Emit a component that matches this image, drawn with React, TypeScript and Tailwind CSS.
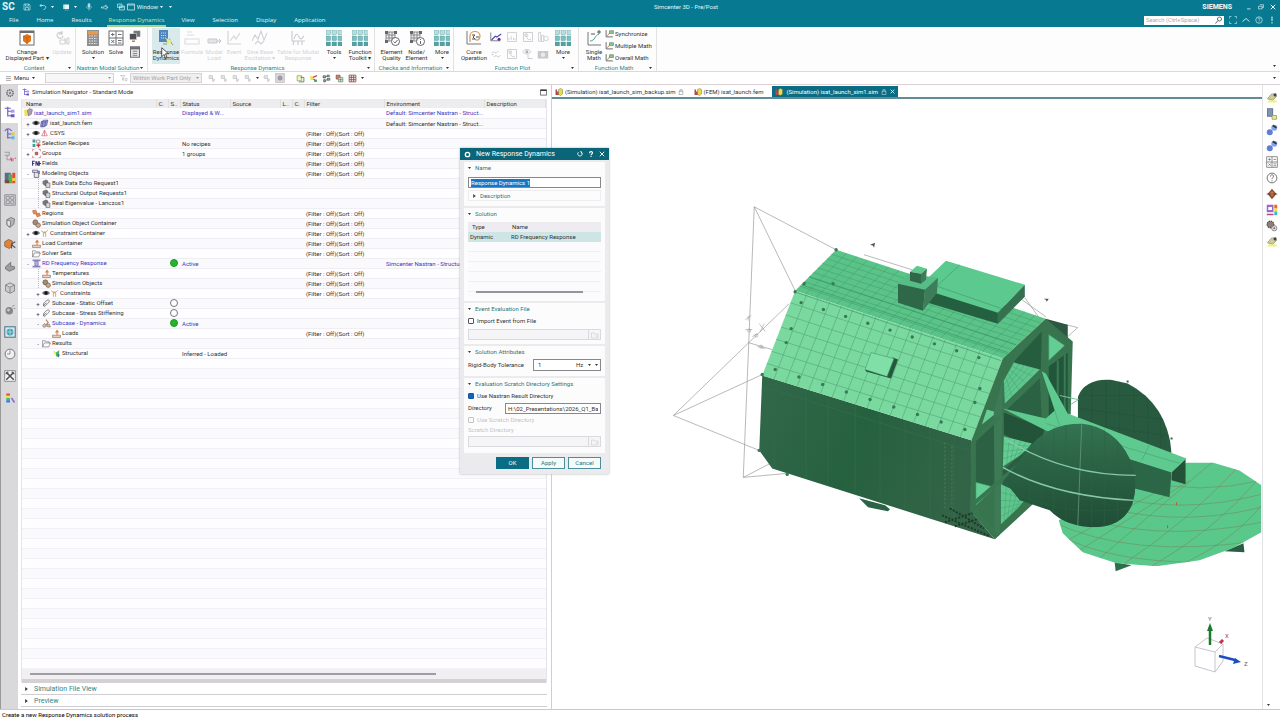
import { useState, type ReactNode } from 'react'

type Pt = [number, number]

const teal = '#4fa3a5'
const grey = '#6b6b70'

// small 16x16 drawings shared by the ribbon, the side bars and the tree
const glyphs: Record<string, ReactNode> = {
    part: <><rect x="1" y="1" width="14" height="14" fill="#fff" stroke={grey} /><path d="M1 2h14" stroke={grey} strokeWidth="2" /><path d="M8 4l4 2v5l-4 3-4-3V6z" fill="#e2761b" /><path d="M4 6l4 2 4-2M8 8v6" stroke="#b8540c" fill="none" strokeWidth=".7" /></>,
    update: <><path d="M8 3a3 3 0 1 0 1 3M8 1v3H5" stroke="#d0d0d4" fill="none" strokeWidth="1.3" /><path d="M6 10h5v4H6zM10 9h2v5M13 8h2v6h-2z" stroke="#d0d0d4" fill="none" /></>,
    solution: <><rect x="2" y="0" width="12" height="16" fill="#8f9092" /><rect x="3" y="1" width="10" height="3.5" fill="#ee9a45" /><path d="M4 6h8M4 8.500h8M4 11h8M4 13.500h8" stroke="#e8e8e8" strokeDasharray="1.500 1" /></>,
    solve: <><rect x="1" y="1" width="14" height="14" fill="#fff" stroke={grey} /><path d="M8 1v14M1 8h14M3 4.500h3.500M4.700 3v3M10 4.500h3.500M3.300 10l3 3M6.300 10l-3 3M10 10.500h3.500M10 13h3.500" stroke={grey} /></>,
    copy: <><rect x="6" y="1" width="9" height="8" fill="#77787c" /><rect x="1" y="5" width="9" height="8" fill="#4f5055" stroke="#eee" strokeWidth=".6" /><path d="M4 15h4" stroke="#d57a35" strokeWidth="2" /></>,
    sheet: <><rect x="2" y="1" width="12" height="14" fill="#e4e4e6" stroke={grey} strokeWidth="1.300" /><path d="M2 3h12" stroke={grey} strokeWidth="3" /><path d="M5 7h6M5 10h6M5 12.500h6" stroke={grey} /></>,
    response: <><rect x="1" y="0" width="9" height="12" fill="#4f87bd" /><path d="M3 3h5M3 5.500h5M3 8h5" stroke="#c7ddf1" strokeDasharray="1.200 .8" /><path d="M5 14h4M9 13c2-6 3-4 4-1s2 3 2 2" stroke="#8b9a6b" fill="none" /><path d="M8 8l6 3-4 4z" fill="#e8ee8c" /></>,
    faintBox: <><path d="M3 2h5M3 5h7M1 9h14v5H1z" stroke="#dcdce0" fill="none" strokeWidth="1.200" /></>,
    faintArrow: <><path d="M2 9h9v4H2z" fill="#e4e4e8" stroke="#c9c9ce" /><path d="M11 11h4M13 9l2 2-2 2" stroke="#c2c2c8" fill="none" /></>,
    faintChart: <path d="M2 1v13h13M4 11l4-5 2 3 4-6" stroke="#d5d5da" fill="none" strokeWidth="1.200" />,
    faintWave: <path d="M0 11l3-6 3 4 3-8 3 9 3-7M3 14l3-3 3 3 3-3" stroke="#cfcfd5" fill="none" strokeWidth="1.100" />,
    faintAxis: <><path d="M2 1v10h13M4 9c2-6 3-6 5-2s3 1 5-1M4 11l-1 4M8 11v4M12 11v4" stroke="#c9c9cf" fill="none" strokeWidth="1.100" /></>,
    grid: <>{[0, 6, 12].map(y => [0, 6, 12].map(x => <rect key={`${x}${y}`} x={x} y={y} width="4.500" height="4.500" fill={y === 0 ? '#b6dfe0' : y === 6 ? '#7cc0c1' : teal} stroke="#4f9597" strokeWidth=".4" />))}</>,
    quality: <><path d="M2 2h9v9H2zM5 2v9M8 2v9M2 5h9M2 8h9" stroke="#8b8b90" fill="#efefef" /><path d="M1 1h3v3H1zM10 1h3v3h-3zM1 10h3v3H1z" fill="#66666b" /><circle cx="11.500" cy="11.500" r="4" fill="#fff" stroke="#66666b" /><path d="M9.500 11.500l1.500 1.500 2.500-3" stroke="#66666b" fill="none" /></>,
    info: <><path d="M2 2h9v9H2zM5 2v9M8 2v9M2 5h9M2 8h9" stroke="#8b8b90" fill="#efefef" /><path d="M1 1h3v3H1zM10 1h3v3h-3zM1 10h3v3H1z" fill="#66666b" /><circle cx="11.500" cy="11.500" r="4" fill="#fff" stroke="#66666b" /><path d="M11.500 9v1M11.500 11v3" stroke="#66666b" /></>,
    curve: <><path d="M1 1v13h14" stroke="#77777c" fill="none" /><path d="M4 12V6c0-6 10-6 10 0 0 4-3 5-5 3" stroke="#dd9251" fill="none" strokeWidth="1.200" /><path d="M6 5h3L7 7l2 2H6M10 7h3" stroke="#55555a" fill="none" /></>,
    plot: <><path d="M1 2v11h13" stroke="#77777c" fill="none" strokeWidth="1.200" /><path d="M2 12l5-5 2 1 6-4" stroke="#4a4ac0" fill="none" strokeWidth="1.500" /><circle cx="12" cy="11" r="2" fill="#61288a" /></>,
    plotOff: <path d="M2 2h12v12H2zM4 12V9M7 12V7M10 12V9M12 12v-2" stroke="#c6c6cb" fill="none" />,
    plotOff2: <path d="M2 2h12v12H2zM4 4h3v3H4zM6 7c1 5 3 5 6 4" stroke="#bfbfc5" fill="none" />,
    barsOff: <><path d="M2 2h3v12H2zM6 6h3v8H6z" stroke="#c8c8cd" fill="none" /><circle cx="12" cy="10" r="3" stroke="#c8c8cd" fill="none" /></>,
    waveOff: <path d="M2 7l3-2 3 2 3-3M5 12l3-2 3 2 3-2M2 9h3" stroke="#c0c0c6" fill="none" />,
    eyeOff: <><path d="M1 5c3-4 8-4 11 0-3 4-8 4-11 0zM8 9v5h6" stroke="#bcbcc2" fill="none" /><circle cx="6.500" cy="5" r="2" fill="#b0b0b6" /></>,
    camOff: <><rect x="1" y="4" width="14" height="10" fill="#c8c8cc" /><circle cx="8" cy="9" r="3" fill="#e9e9eb" /></>,
    math: <><path d="M2 2v13h13" stroke="#77777c" fill="none" /><path d="M4 11c5 0 5-6 9-7" stroke="#4c9c8b" fill="none" /><path d="M5 4h4M11 2h4M13 0v4" stroke="#55555a" /></>,
    mathRow: <><path d="M2 2v12h12" stroke="#55555a" fill="none" strokeWidth="1.500" /><path d="M4 12l7-8" stroke="#a9793a" strokeWidth="1.500" /><path d="M8 3h7v5H8z" fill="#8bc48e" stroke="#4f7f62" /></>,
    navigator: <><path d="M1 3h8M5 1v13M5 7h5M5 13h5" stroke="#6a5ac7" fill="none" strokeWidth="1.500" /><rect x="9" y="5" width="5" height="4" fill="#a89de0" /><rect x="9" y="11" width="5" height="4" fill="#6a5ac7" /></>,
    navigator2: <><path d="M1 4c3-4 7-4 9 0M5 1v13M5 8h5M5 13h5" stroke="#6a5ac7" fill="none" strokeWidth="1.500" /><rect x="10" y="6" width="4" height="4" fill="#e8c845" /><rect x="10" y="11" width="4" height="4" fill="#5ab8dc" /></>,
    gear: <><circle cx="8" cy="8" r="5" fill="#d9d9dc" stroke="#6c6c70" strokeWidth="2.500" strokeDasharray="2 1" /><circle cx="8" cy="8" r="2" fill="#8a8a8d" /></>,
    assembly: <><path d="M1 3h6v4H1M4 7v6h4" stroke="#8b8b90" fill="none" /><path d="M8 11h2v4M8 13h3M12 11v4M14 11h2" stroke="#d4506b" fill="none" strokeWidth="1.300" /></>,
    views: <><rect x="1" y="1" width="8" height="12" fill="#5a6a94" /><rect x="6" y="3" width="5" height="12" fill="#54b454" /><rect x="11" y="1" width="4" height="14" fill="#e34d3d" /><path d="M11 8h4v4h-4z" fill="#efd441" /><path d="M1 11h6v4H1z" fill="#7a4a35" /></>,
    tiles: <path d="M1 1h14v14H1zM3 3h4v4H3zM9 3h4v4H9zM3 9h4v4H3zM9 9h4v4H9z" stroke="#8a8a8e" fill="none" strokeWidth="1.200" />,
    cylinder: <><path d="M4 5l5-3 5 2-1 7-5 4-4-3z" fill="#b6b6ba" stroke="#66666a" /><path d="M4 5l5 2-1 8-4-3z" fill="#e4e4e6" stroke="#66666a" /></>,
    orange: <><path d="M1 5l5-3 5 2v6l-4 4-6-3z" fill="#e2833a" stroke="#7a5a3d" /><path d="M10 8l5-3M10 9l5 4M10 8v6" stroke="#55555a" strokeWidth="1.500" /></>,
    wedge: <><path d="M2 9l7-6v5l5 1v3l-7 3-5-3z" fill="#9b9ba0" stroke="#6a6a6e" /></>,
    cube: <path d="M2 4l6-3 6 3v8l-6 3-6-3zM2 4l6 3 6-3M8 7v8" fill="#c9c9cc" stroke="#77777b" />,
    ball: <><circle cx="7" cy="9" r="5" fill="#85858a" /><circle cx="6" cy="8" r="2" fill="#c5c5c9" /><path d="M11 3l3-1M13 6h2" stroke="#77777b" /></>,
    globe: <><rect x="1" y="1" width="14" height="14" fill="#d5e6ec" stroke="#5a7f91" strokeWidth="1.500" /><circle cx="8" cy="8" r="4.500" fill="#3f9fb4" /><path d="M4 8h8M8 4v8" stroke="#bfe4ea" /></>,
    clock: <><circle cx="8" cy="8" r="6.500" fill="#f0f0f2" stroke="#77777b" strokeWidth="1.300" /><path d="M8 3v5H4" stroke="#77777b" fill="none" /></>,
    tools: <><rect x="1" y="1" width="14" height="14" fill="#f3f3f4" stroke="#77777b" /><path d="M3 3l10 10M13 3L3 13" stroke="#4f4f54" strokeWidth="2" /><path d="M2 5h3V2M14 5h-3V2" stroke="#4f4f54" fill="none" strokeWidth="1.300" /></>,
    rainbow: <><path d="M3 2h5v3H3z" fill="#e8502f" /><path d="M3 5h5v3H3z" fill="#f2e13c" /><path d="M3 8h5v3H3z" fill="#3cc46a" /><path d="M3 11h5v3H3z" fill="#2f7de0" /><path d="M10 8l4 6" stroke="#8e6ad0" strokeWidth="2" /></>,
    sim: <><path d="M0 3h7l2 11H1z" fill="#f0e35a" /><path d="M6 4l4-3 5 2-2 8-5 3z" fill="#a6a0ae" stroke="#6f6678" /></>,
    fem: <><path d="M2 5l5-3h7l-2 9-5 3H1z" fill="#8f97d0" stroke="#4c4c88" /><path d="M2 5h8l4-3M10 5l-2 9M5 5l-1 9" stroke="#4c4c88" fill="none" /></>,
    csys: <path d="M8 2l-5 10h10zM8 2v10" stroke="#d1606c" fill="none" strokeWidth="1.200" />,
    recipes: <><path d="M1 1h5v5H1zM1 9h5v5H1z" fill="#489e96" /><path d="M8 2h6v5H8z" fill="none" stroke="#666" /><path d="M8 11h7M11.500 8v7" stroke="#c43b3b" strokeWidth="2.500" /></>,
    groups: <><path d="M1 4V1h3M12 1h3v3M1 12v3h3M12 15h3v-3" stroke="#d26d6d" fill="none" strokeWidth="1.300" /><path d="M5 5h6v6H5z" fill="#a66d58" /></>,
    fields: <path d="M1 12V4h4M1 8h3M7 12V4l4 8V4M13 4v8M13 8h3" stroke="#35356e" fill="none" strokeWidth="1.800" />,
    objects: <><path d="M1 2h9v4H1zM4 6v9h8V5" fill="#e5e5ea" stroke="#44446a" strokeWidth="1.200" /><path d="M10 3h4v6h-4z" fill="#7b7ba9" /></>,
    card: <><path d="M1 4l6-3 4 2v7l-5 3-5-4z" fill="#77777b" /><path d="M7 7h7v8H7z" fill="#d7d7da" stroke="#4d4d51" /></>,
    regions: <><path d="M1 3l6-1 2 6-6 1zM7 9l6-2 2 5-6 2z" fill="#e98b53" stroke="#b55d2a" /></>,
    simObj: <><circle cx="6" cy="6" r="4.500" fill="#a98c72" stroke="#5d4d40" /><circle cx="11" cy="11" r="4" fill="#c9a98a" stroke="#5d4d40" /></>,
    constraint: <><path d="M2 3l4 3v8M14 2l-4 4v8" stroke="#8bbd63" fill="none" strokeWidth="1.500" /><path d="M6 6h4" stroke="#e39745" strokeWidth="3" /></>,
    load: <><path d="M1 15v-4h14v4z" fill="#e6d7c8" stroke="#7a5b45" /><path d="M8 11V6H5l4-5 4 5h-3v5z" fill="#dc8444" /></>,
    folder: <path d="M1 14V3h5l1 2h6v3M1 14l3-7h11l-3 7z" fill="#fbfbfb" stroke="#66666a" />,
    pillar: <><path d="M1 1h14v3H1zM1 12h14v3H1z" fill="#8a87c0" /><path d="M5 4h6v8H5z" fill="#b2b0d8" stroke="#6461a0" /></>,
    clip: <path d="M3 12c-2-4 4-9 7-10s4 2 2 4-6 7-8 7-1-3 4-6" stroke="#66666a" fill="none" strokeWidth="1.500" />,
    dynamics: <><path d="M7 1l4 5-7 8" stroke="#b48269" fill="none" strokeWidth="2" /><path d="M1 11l4-3 3 5-5 2zM9 10l4-1 2 5h-5z" fill="#d3c0b4" stroke="#7a6a60" /></>,
    structural: <><path d="M2 2l5 4v4l-3-1z" fill="#efe94a" /><path d="M7 6l6-4-1 12-5-1z" fill="#49b85d" /><path d="M10 9l4 1-3 5z" fill="#3566b8" /></>,
    eye: <><path d="M0 8c4-6 12-6 16 0-4 6-12 6-16 0z" fill="#77777c" /><circle cx="8" cy="8" r="3.500" fill="#111" /></>,
    rulerYellow: <><path d="M2 9l5-6 6-1 1 4-5 5z" fill="#cfcf9a" stroke="#8b8b82" /><path d="M4 11h10v3H2z" fill="#eef07c" /><circle cx="12" cy="4" r="2" fill="#444" /></>,
    dbYellow: <><rect x="2" y="1" width="7" height="10" fill="#7f93b5" stroke="#55607a" /><path d="M8 10h6v5H8z" fill="#e3e98f" stroke="#93965c" /></>,
    dumbbell: <><circle cx="5" cy="11" r="4" fill="#5d7fd6" /><circle cx="11" cy="5" r="4" fill="#86a2ea" /><path d="M9 2l5 3" stroke="#333" strokeWidth="2" /></>,
    help: <><circle cx="8" cy="8" r="6.500" fill="#fff" stroke="#66666a" strokeWidth="1.200" /><path d="M6 6c0-3 4-3 4-.5C10 7.500 8 7.500 8 9.500M8 11v1.500" stroke="#66666a" fill="none" strokeWidth="1.200" /></>,
    diamond: <><path d="M8 1l6 7-6 7-6-7z" fill="#8d4f35" /><path d="M8 4l3 4-3 3-3-3z" fill="#d97f4b" /><path d="M1 8h14" stroke="#4c3b33" /></>,
    palette: <><rect x="1" y="1" width="9" height="10" fill="#9a6ac9" /><path d="M3 4h5v4H3z" fill="#fff" /><path d="M11 1h4v5h-4z" fill="#f0692f" /><path d="M11 6h4v4h-4z" fill="#e6e04b" /><path d="M11 10h4v5h-4z" fill="#44b9c4" /><path d="M1 14h9" stroke="#b14a8d" strokeWidth="2" /></>,
    gears: <><circle cx="6" cy="6" r="4.500" fill="#8d8072" stroke="#4e463e" strokeDasharray="2 1" strokeWidth="1.500" /><circle cx="11" cy="11" r="3.500" fill="#e6e6e8" stroke="#6d6d71" /><circle cx="11" cy="11" r="1.300" fill="#6d6d71" /></>,
    pick: <><path d="M2 3h7v6H2zM8 8l6 4-3 1-1 3z" stroke="#b9b9bf" fill="#e2e2e6" /></>,
    pickGreen: <><path d="M2 3h8v9H2z" fill="#f6f6b9" stroke="#77774a" /><path d="M8 6h6v8H5" fill="none" stroke="#2e8b57" strokeWidth="1.500" /></>,
    brush: <><path d="M2 3l5 2 1 5-5 1z" fill="#e8e04d" /><path d="M7 6l7-3M8 9l5 4" stroke="#c8483e" strokeWidth="2.500" /><path d="M9 10h5v4H9z" fill="#49a162" /></>,
    nodes: <path d="M2 3h4v4H2zM9 2h4v3H9zM9 8h5v3H9zM3 10h3v4H3zM6 5l3-1M6 12l3-2" fill="#8ec4a9" stroke="#333" />,
    redGrid: <><path d="M2 2h7v7H2z" fill="#d57c71" stroke="#7c3a34" /><path d="M6 6h8v8H6zM6 10h8M10 6v8" fill="#dfeadf" stroke="#4a7a4a" /></>,
    mesh: <path d="M2 2h12v12H2zM6 2v12M10 2v12M2 6h12M2 10h12" fill="#f4e7e4" stroke="#8c564e" strokeWidth="1.500" />,
    filter: <path d="M1 3h9L7 7v6l-2-1V7zM10 9h4v4h-4z" stroke="#a9a9ae" fill="none" />,
    square: <><rect x="1" y="1" width="14" height="14" fill="#d7d7da" stroke="#b6b6ba" /><circle cx="8" cy="8" r="4" fill="#9d9da2" /></>,
    save: <path d="M2 2h10l2 2v10H2zM5 2v4h6V2M5 14V9h6v5" stroke="#d9f0f3" fill="none" strokeWidth="1.200" />,
    undo: <path d="M5 2L2 5l3 3M2 5h7c6 0 6 7 0 8" stroke="#d9f0f3" fill="none" strokeWidth="1.500" />,
    screens: <><path d="M2 3h4v9H2z" fill="#9bd0da" /><rect x="5" y="3" width="9" height="9" fill="#e5f6f8" /><path d="M5 14h8" stroke="#9bd0da" /></>,
    mic: <><rect x="6" y="1" width="4" height="8" rx="2" fill="#a6d6de" stroke="#d9f0f3" /><path d="M3 7c0 6 10 6 10 0M8 12v3" stroke="#d9f0f3" fill="none" /></>,
    speaker: <path d="M1 8h4l5-4v4h4l-4 5-3-3H1z" fill="none" stroke="#d9f0f3" strokeWidth="1.400" />,
    windows: <path d="M1 2h9v7H1zM5 6h10v8H5zM5 8h10" stroke="#e2f4f6" fill="#1a879c" strokeWidth="1.200" />,
    frame: <path d="M1 2h14v12H1zM1 4h14" stroke="#e2f4f6" fill="none" strokeWidth="1.400" />,
    mag: <path d="M9 2a4 4 0 1 1-.1 0M6 9l-5 6" stroke="#45545a" fill="none" strokeWidth="1.800" />,
    expand: <path d="M1 5V1h4M11 1h4v4M15 11v4h-4M5 15H1v-4" stroke="#a9dbe3" fill="none" strokeWidth="1.500" />,
    up: <path d="M1 11l7-6 7 6" stroke="#d9f0f3" fill="none" strokeWidth="1.800" />,
    helpLight: <><circle cx="8" cy="8" r="6.500" fill="none" stroke="#d9f0f3" strokeWidth="1.300" /><path d="M6 6c0-3 4-3 4-.5C10 7.500 8 7.500 8 9.500M8 11v1.500" stroke="#d9f0f3" fill="none" strokeWidth="1.300" /></>,
    bang: <path d="M8 1v9M8 12v3" stroke="#d9f0f3" strokeWidth="2" />,
    minimize: <path d="M3 13h9" stroke="#fff" strokeWidth="2" />,
    restore: <path d="M5 2h10v7h-4M1 6h10v7H1z" stroke="#fff" fill="none" strokeWidth="1.600" />,
    close: <path d="M2 2l12 12M14 2L2 14" stroke="#fff" strokeWidth="2.500" />,
    reset: <path d="M4 3a6 6 0 1 0 8 0M12 7V2H8" stroke="#fff" fill="none" strokeWidth="2.200" />,
    question: <path d="M4 6c0-6 9-5 8-1 0 3-4 3-4 6M8 13v3" stroke="#fff" fill="none" strokeWidth="3" />,
    gearLight: <><circle cx="8" cy="8" r="5" fill="none" stroke="#fff" strokeWidth="3" /></>,
    lock: <path d="M3 6h10v9H3zM5 6V2h6v4" stroke="#777" fill="none" strokeWidth="1.400" />,
    lockLight: <path d="M3 6h10v9H3zM5 6V2h6v4" stroke="#e3f3f5" fill="none" strokeWidth="1.400" />,
    femTab: <><path d="M1 3h3v11H1zM4 7h4v7H4z" fill="#b0485d" /><path d="M7 3l4-2 4 2v9l-4 3-4-2z" fill="#e8dc4b" stroke="#7c7738" /></>,
    browse: <path d="M1 14V4h5l1 2h7v8zM9 10h4" stroke="#c3c3c8" fill="none" />,
    maximize: <><path d="M1 2h14v12H1z" fill="none" stroke="#333" strokeWidth="1.500" /><path d="M1 3h14" stroke="#333" strokeWidth="3" /></>,
}

function Glyph({ name, className = 'size-2' }: { name: string; className?: string }) {
    return <svg viewBox="0 0 16 16" className={`shrink-0 ${className}`} aria-hidden="true">{glyphs[name]}</svg>
}

function Caret({ className = 'text-[#333]' }: { className?: string }) {
    return <svg viewBox="0 0 6 4" className={`h-[2px] w-[3px] shrink-0 ${className}`} aria-hidden="true"><path d="M0 0h6L3 4z" fill="currentColor" /></svg>
}

function TitleBar() {
    const menus = ['File', 'Home', 'Results', 'Response Dynamics', 'View', 'Selection', 'Display', 'Application']
    return (
        <header className="h-[27px] shrink-0 bg-[#077a91] text-[#e4f4f6]">
            <div className="grid h-[13px] grid-cols-3 items-center">
                <div className="flex items-center gap-2 pl-[2px]">
                    <span className="text-[10px] leading-3 font-bold">SC</span>
                    <Glyph name="save" />
                    <span className="flex items-center gap-1"><Glyph name="undo" /><Caret className="text-white" /></span>
                    <span className="flex items-center gap-1"><Glyph name="screens" /><Caret className="text-white" /></span>
                    <Glyph name="mic" />
                    <Glyph name="speaker" />
                    <span className="flex items-center gap-[2px]">
                        <Glyph name="windows" /><Glyph name="frame" />
                        <button>Window</button><Caret className="text-white" /><Caret className="ml-1 text-white" />
                    </span>
                </div>
                <h1 className="pl-[92px] text-center">Simcenter 3D - Pre/Post</h1>
                <div className="flex items-center justify-end gap-[6px] pr-1">
                    <span className="mr-2 text-[7px] font-extrabold">SIEMENS</span>
                    <button aria-label="Minimize"><Glyph name="minimize" className="size-[6px]" /></button>
                    <button aria-label="Restore"><Glyph name="restore" className="size-[6px]" /></button>
                    <button aria-label="Close"><Glyph name="close" className="size-[6px]" /></button>
                </div>
            </div>
            <div className="flex h-[14px] items-center">
                <nav className="flex h-full items-stretch font-['Open_Sans','Noto_Sans',sans-serif]">
                    {menus.map(m => (
                        <button
                            key={m}
                            className={m === 'Response Dynamics'
                                ? 'mx-[6px] border-b-2 border-[#a8cf8e] px-[2px] pt-[2px] text-[#cfe79a]'
                                : 'px-[9px] pt-[2px] pb-[2px]'}
                        >
                            {m}
                        </button>
                    ))}
                </nav>
                <div className="ml-auto flex items-center gap-[5px] pr-1">
                    <label className="flex h-[9px] w-20 items-center bg-white pr-[1px]">
                        <input aria-label="Search" placeholder="Search (Ctrl+Space)" className="w-full px-[2px] text-[#444] placeholder:text-[#aaa]" />
                        <Glyph name="mag" />
                    </label>
                    {['expand', 'up', 'helpLight', 'bang'].map(n => <button key={n} aria-label={n}><Glyph name={n} /></button>)}
                </div>
            </div>
        </header>
    )
}

interface RibbonButtonProps {
    icon: string
    label: string
    width: string
    off?: boolean
    on?: boolean
    menu?: boolean
}

function RibbonButton({ icon, label, width, off, on, menu }: RibbonButtonProps) {
    return (
        <button className={`flex h-[36px] shrink-0 flex-col items-center pt-[2px] ${width} ${off ? 'text-[#d3d3d8]' : 'text-[#333]'} ${on ? 'bg-[#d8eaeb]' : ''}`}>
            <Glyph name={icon} className="size-4" />
            <span className="mt-[3px] text-center leading-[6px] whitespace-pre">{label}</span>
            {menu && <span className="mt-[2px]"><Caret /></span>}
        </button>
    )
}

function RibbonGroup({ title, width, children }: { title: string; width: string; children: ReactNode }) {
    return (
        <section className={`flex shrink-0 flex-col justify-between border-r border-[#e3e3e6] pt-[1px] ${width}`}>
            <div className="flex pl-1">{children}</div>
            <div className="flex h-2 items-center justify-center pr-1 text-[#2f8587]">
                <span className="flex-1 text-center whitespace-nowrap">{title}</span><Caret />
            </div>
        </section>
    )
}

function Ribbon() {
    return (
        <div className="flex h-[45px] shrink-0 overflow-hidden border-b border-[#dcd8dc] bg-[#fdfdfd]">
            <RibbonGroup title="Context" width="w-[76px]">
                <RibbonButton icon="part" label={'Change\nDisplayed Part ▾'} width="w-[46px]" />
                <RibbonButton icon="update" label="Update" width="w-6" off />
            </RibbonGroup>
            <RibbonGroup title="Nastran Modal Solution" width="w-[72px]">
                <RibbonButton icon="solution" label="Solution" width="w-[26px]" menu />
                <RibbonButton icon="solve" label="Solve" width="w-5" />
                <div className="flex w-[18px] flex-col items-center gap-1 pt-[2px]">
                    <Glyph name="copy" className="size-3" />
                    <Glyph name="sheet" className="size-3" />
                </div>
            </RibbonGroup>
            <RibbonGroup title="Response Dynamics" width="w-[227px]">
                <RibbonButton icon="response" label={'Response\nDynamics'} width="w-[28px]" on />
                <RibbonButton icon="faintBox" label="Formula" width="w-6" off />
                <RibbonButton icon="faintArrow" label={'Modal\nLoad'} width="w-5" off />
                <RibbonButton icon="faintChart" label="Event" width="w-5" off />
                <RibbonButton icon="faintWave" label={'Sine Base\nExcitation ▾'} width="w-8" off />
                <RibbonButton icon="faintAxis" label={'Table for Modal\nResponse'} width="w-[44px]" off />
                <RibbonButton icon="grid" label="Tools" width="w-7" menu />
                <RibbonButton icon="grid" label={'Function\nToolkit ▾'} width="w-6" />
            </RibbonGroup>
            <RibbonGroup title="Checks and Information" width="w-[79px]">
                <RibbonButton icon="quality" label={'Element\nQuality'} width="w-[25px]" />
                <RibbonButton icon="info" label={'Node/\nElement'} width="w-[25px]" />
                <RibbonButton icon="grid" label="More" width="w-[26px]" menu />
            </RibbonGroup>
            <RibbonGroup title="Function Plot" width="w-[125px]">
                <RibbonButton icon="curve" label={'Curve\nOperation'} width="w-8" />
                <div className="grid grid-cols-4 content-start gap-[5px] pt-[3px]">
                    {['plot', 'plotOff', 'plotOff2', 'barsOff', 'waveOff', 'plotOff2', 'eyeOff', 'camOff'].map((n, i) => (
                        <button key={i} aria-label={`Plot tool ${i + 1}`}><Glyph name={n} className="size-3" /></button>
                    ))}
                </div>
                <RibbonButton icon="grid" label="More" width="w-[30px]" menu />
            </RibbonGroup>
            <RibbonGroup title="Function Math" width="w-[78px]">
                <RibbonButton icon="math" label={'Single\nMath'} width="w-[22px]" />
                <div className="flex flex-col gap-[3px] pt-[1px]">
                    {['Synchronize', 'Multiple Math', 'Overall Math'].map(t => (
                        <button key={t} className="flex h-[9px] items-center gap-[1px] whitespace-nowrap text-[#333]">
                            <Glyph name="mathRow" className="size-[9px]" />{t}
                        </button>
                    ))}
                </div>
            </RibbonGroup>
            <div className="flex flex-1 items-end justify-end p-1"><Caret /></div>
        </div>
    )
}

function SelectionBar() {
    return (
        <div className="flex h-[13px] shrink-0 items-center gap-[6px] border-b border-[#ddd0d4] bg-white pl-[6px] pr-1">
            <button className="flex w-[33px] items-center gap-[3px]">
                <svg viewBox="0 0 8 8" className="size-[5px]"><path d="M0 1h8M0 4h8M0 7h8" stroke="#777" /></svg>
                Menu <Caret />
            </button>
            <label className="flex h-[10px] w-[69px] items-center border border-[#d5d5d9] bg-[#f7f7f8] px-[2px]">
                <select aria-label="Type filter" className="w-full appearance-none"><option></option></select><Caret className="text-[#999]" />
            </label>
            <Glyph name="filter" />
            <label className="-ml-1 flex h-[10px] w-[72px] items-center border border-[#d5d5d9] bg-[#efeff0] px-[2px] text-[#a4a4a9]">
                <select aria-label="Selection scope" className="w-full appearance-none"><option>Within Work Part Only</option></select><Caret className="text-[#999]" />
            </label>
            <div className="flex flex-1 items-center gap-1">
                {['pick', 'pick', 'pick', 'pick'].map((n, i) => <Glyph key={i} name={n} />)}
                <Caret />
                <Glyph name="pick" className="size-2" />
                <Glyph name="square" className="size-[10px]" />
                <span className="w-[3px]" />
                {['pickGreen', 'brush', 'nodes', 'redGrid', 'mesh'].map(n => <Glyph key={n} name={n} className="size-[9px]" />)}
                <Caret />
            </div>
            <Caret />
        </div>
    )
}

interface TreeRow {
    name: string
    icon: string
    level: 0 | 1 | 2
    root?: boolean
    sign?: '+' | '-'
    eye?: boolean
    dot?: 'on' | 'off'
    status?: string
    filter?: boolean
    env?: string
    accent?: boolean
}

const rows: TreeRow[] = [
    { name: 'isat_launch_sim1.sim', icon: 'sim', level: 0, root: true, status: 'Displayed & W...', env: 'Default: Simcenter Nastran - Struct...', accent: true },
    { name: 'isat_launch.fem', icon: 'fem', level: 0, sign: '+', eye: true, env: 'Default: Simcenter Nastran - Struct...' },
    { name: 'CSYS', icon: 'csys', level: 0, sign: '+', eye: true, filter: true },
    { name: 'Selection Recipes', icon: 'recipes', level: 0, status: 'No recipes', filter: true },
    { name: 'Groups', icon: 'groups', level: 0, sign: '+', status: '1 groups', filter: true },
    { name: 'Fields', icon: 'fields', level: 0, filter: true },
    { name: 'Modeling Objects', icon: 'objects', level: 0, sign: '-', filter: true },
    { name: 'Bulk Data Echo Request1', icon: 'card', level: 1 },
    { name: 'Structural Output Requests1', icon: 'card', level: 1 },
    { name: 'Real Eigenvalue - Lanczos1', icon: 'card', level: 1 },
    { name: 'Regions', icon: 'regions', level: 0, filter: true },
    { name: 'Simulation Object Container', icon: 'simObj', level: 0, filter: true },
    { name: 'Constraint Container', icon: 'constraint', level: 0, sign: '+', eye: true, filter: true },
    { name: 'Load Container', icon: 'load', level: 0, filter: true },
    { name: 'Solver Sets', icon: 'folder', level: 0, filter: true },
    { name: 'RD Frequency Response', icon: 'pillar', level: 0, sign: '-', dot: 'on', status: 'Active', env: 'Simcenter Nastran - Structur...', accent: true },
    { name: 'Temperatures', icon: 'load', level: 1, filter: true },
    { name: 'Simulation Objects', icon: 'simObj', level: 1, filter: true },
    { name: 'Constraints', icon: 'constraint', level: 1, sign: '+', eye: true, filter: true },
    { name: 'Subcase - Static Offset', icon: 'clip', level: 1, sign: '+', dot: 'off' },
    { name: 'Subcase - Stress Stiffening', icon: 'clip', level: 1, sign: '+', dot: 'off' },
    { name: 'Subcase - Dynamics', icon: 'dynamics', level: 1, sign: '-', dot: 'on', status: 'Active', accent: true },
    { name: 'Loads', icon: 'load', level: 2, filter: true },
    { name: 'Results', icon: 'folder', level: 1, sign: '-' },
    { name: 'Structural', icon: 'structural', level: 2, status: 'Inferred - Loaded' },
]

const indent = ['pl-[2px]', 'pl-[12px]', 'pl-[22px]']

function NavigatorTable() {
    return (
        <table className="w-full table-fixed border-collapse text-left whitespace-nowrap">
            <colgroup>
                <col className="w-[134px]" /><col className="w-3" /><col className="w-3" />
                <col className="w-[50px]" /><col className="w-[50px]" /><col className="w-3" /><col className="w-3" />
                <col className="w-20" /><col className="w-[100px]" /><col />
            </colgroup>
            <thead>
                <tr className="h-[9px] bg-[#ededef]">
                    {['Name', 'C.', 'S..', 'Status', 'Source', 'L..', 'C.', 'Filter', 'Environment', 'Description'].map((h, i) => (
                        <th key={i} className={`border-r border-[#e0e0e3] p-0 font-normal leading-[9px] ${i === 0 ? 'pl-1' : 'pl-[2px]'}`}>{h}</th>
                    ))}
                </tr>
            </thead>
            <tbody>
                {rows.map((r, i) => (
                    <tr key={i} className={`h-[10px] border-b border-[#f0eef3] ${r.accent ? 'text-[#4036c2]' : ''} ${i % 2 ? 'bg-[#faf9fc]' : 'bg-[#fefdff]'}`}>
                        <td className="overflow-hidden p-0">
                            <div className={`flex h-[9px] items-center ${indent[r.level]}`}>
                                {!r.root && (
                                    <span className="flex w-2 shrink-0 justify-center leading-[9px] text-[#333]">
                                        {r.sign ?? (r.level === 1 && <span className="h-[9px] border-l border-dotted border-[#bbb]" />)}
                                    </span>
                                )}
                                {r.eye && <Glyph name="eye" />}
                                <Glyph name={r.icon} className="mr-[1px] size-[9px]" />
                                <span>{r.name}</span>
                            </div>
                        </td>
                        <td className="p-0" />
                        <td className="p-0">
                            {r.dot && <span className={`mx-auto block size-2 rounded-full border ${r.dot === 'on' ? 'border-[#1f9a26] bg-[#23b52b]' : 'border-[#777] bg-white'}`} />}
                        </td>
                        <td className="p-0 pl-[2px] leading-[9px]">{r.status}</td>
                        <td className="p-0" /><td className="p-0" /><td className="p-0" />
                        <td className="p-0 pl-[2px] leading-[9px]">{r.filter && '(Filter : Off)(Sort : Off)'}</td>
                        <td className="p-0 pl-[2px] leading-[9px]">{r.env}</td>
                        <td className="p-0" />
                    </tr>
                ))}
            </tbody>
        </table>
    )
}

function Navigator() {
    return (
        <aside className="flex w-[534px] shrink-0 flex-col border-r border-[#cfcfd3] bg-white pr-1 pl-[3px]">
            <div className="flex h-[14px] shrink-0 items-center gap-[2px] pl-[1px]">
                <Glyph name="navigator" />
                <h2 className="flex-1">Simulation Navigator - Standard Mode</h2>
                <button aria-label="Maximize panel"><Glyph name="maximize" className="size-[7px]" /></button>
            </div>
            <div className="flex flex-1 flex-col border-x border-[#e6e4ea] bg-[repeating-linear-gradient(#fefdff_0px,#fefdff_9px,#f3f1f6_9px,#f3f1f6_10px,#faf9fc_10px,#faf9fc_19px,#f3f1f6_19px,#f3f1f6_20px)]">
                <NavigatorTable />
                <div className="mt-auto h-[10px] bg-[#f1eff2] px-2 pt-[4px]">
                    <div className="h-[2px] w-4/5 bg-[#9f9ca5]" />
                </div>
                <div className="h-1 bg-[#d3d1d4]" />
            </div>
            {['Simulation File View', 'Preview'].map(t => (
                <button key={t} className="flex h-3 shrink-0 items-center gap-[6px] border-b border-[#cfcfd3] pl-1 text-[#2f8587]">
                    <svg viewBox="0 0 4 6" className="h-1 w-[3px]"><path d="M0 0l4 3-4 3z" fill="#333" /></svg>
                    <span className="text-[7px]">{t}</span>
                </button>
            ))}
            <div className="h-[2px] shrink-0" />
        </aside>
    )
}

function LeftRail() {
    const items = ['navigator', 'navigator2', 'assembly', 'views', 'tiles', 'cylinder', 'orange', 'wedge', 'cube', 'ball', 'globe', 'clock', 'tools', 'rainbow']
    return (
        <nav className="w-[18px] shrink-0 border-l border-[#999] bg-[#d9d9db]">
            <button aria-label="Settings" className="flex h-4 w-full items-center justify-center"><Glyph name="gear" className="size-[10px]" /></button>
            {items.map((n, i) => (
                <button key={n} aria-label={n} className={`flex h-[22px] w-full items-center justify-center ${i === 0 ? 'bg-white' : ''}`}>
                    <Glyph name={n} className="size-3" />
                </button>
            ))}
        </nav>
    )
}

function RightRail() {
    const items = ['rulerYellow', 'dbYellow', 'dumbbell', 'dumbbell', 'solve', 'help', 'diamond', 'palette', 'gears', 'rulerYellow']
    return (
        <nav className="flex w-[18px] shrink-0 flex-col border-l border-[#e3e3e6] bg-white pt-[5px]">
            {items.map((n, i) => (
                <button key={i} aria-label={`${n} ${i + 1}`} className="flex h-4 w-full items-center justify-center">
                    <Glyph name={n} className="size-3" />
                </button>
            ))}
            <span className="mt-auto mb-[3px] ml-1"><Caret /></span>
        </nav>
    )
}

const pts = (p: Pt[]) => p.map(q => q.join(',')).join(' ')
const mix = (a: Pt, b: Pt, t: number): Pt => [a[0] + (b[0] - a[0]) * t, a[1] + (b[1] - a[1]) * t]

// a shaded quad with its element lines, n along a-b and m along a-d
function Mesh({ q, n, m, fill, stroke, width = 0.5 }: { q: [Pt, Pt, Pt, Pt]; n: number; m: number; fill: string; stroke: string; width?: number }) {
    const [a, b, c, d] = q
    const lines: [Pt, Pt][] = []
    for (let i = 1; i < n; i++) lines.push([mix(a, b, i / n), mix(d, c, i / n)])
    for (let j = 1; j < m; j++) lines.push([mix(a, d, j / m), mix(b, c, j / m)])
    return (
        <g>
            <polygon points={pts(q)} fill={fill} />
            <path d={lines.map(([s, e]) => `M${s.join(' ')}L${e.join(' ')}`).join('')} stroke={stroke} strokeWidth={width} fill="none" />
        </g>
    )
}

function Poly({ p, fill, stroke }: { p: Pt[]; fill: string; stroke?: string }) {
    return <polygon points={pts(p)} fill={fill} stroke={stroke} strokeWidth=".5" />
}

function Satellite() {
    const dots: Pt[] = []
    for (let i = 0; i < 9; i++) {
        dots.push(mix([801, 302], [979, 357], i / 8))
        dots.push(mix([775, 369], [965, 429], i / 8))
    }
    dots.push([836, 249], [795, 291], [762, 374], [791, 328], [786, 342], [787, 474], [759, 450], [804, 283], [833, 283], [980, 388], [975, 402])
    return (
        <svg viewBox="552 98 710 611" className="size-full" role="img" aria-label="Satellite finite element model">
            <defs>
                <linearGradient id="wall" x1="0" y1="0" x2="1" y2="0.3">
                    <stop offset="0" stopColor="#31684a" /><stop offset=".5" stopColor="#26613f" /><stop offset="1" stopColor="#336447" />
                </linearGradient>
                <linearGradient id="disc" x1="0" y1="0" x2="0" y2="1">
                    <stop offset="0" stopColor="#347553" /><stop offset=".35" stopColor="#2c6446" /><stop offset="1" stopColor="#1f4d35" />
                </linearGradient>
                <clipPath id="dishClip"><path d="M1187 462L1213 462L1240 470L1262 485V532L1233 548L1200 560L1157 566L1117 563L1083 552L1063 533L1059 520L1100 500L1130 475L1172 475Z" /></clipPath>
                <clipPath id="rearClip"><path d="M1078 415V397Q1084 379 1110 379L1128 383Q1168 404 1172 452L1170 470L1078 440Z" /></clipPath>
                <clipPath id="discClip"><path d="M1026 452Q1045 423 1082 423Q1115 427 1130 458Q1140 480 1133 503Q1124 526 1096 527Q1066 527 1050 510L1020 500L1004 480Z" /></clipPath>
            </defs>
            <g stroke="#9a9a9e" strokeWidth=".7" fill="none">
                <path d="M754 206L743 477M754 206L836 249M754 206L795 290M673 415L789 303M673 415L762 374M673 415L759 450M743 477L772 462M743 477L787 473M748 342L772 349M864 254L912 269M1022 299L1046 316M1025 297L1040 318M1066 324L1078 327L1068 336" />
            </g>
            <g stroke="#888" strokeWidth=".5" fill="none">
                <path d="M745 329h7M748 315v5M745 319l6-4M752 336l5-3M759 323l6 8M764 323l-4 8M757 346l8 2" /><circle cx="749" cy="330" r="1.500" /><circle cx="756" cy="335" r="1.500" /><circle cx="761" cy="346" r="1.500" />
            </g>
            <path d="M870 244l5-2-1 5-1-2zM1044 298l5 0-2 3-1-2z" fill="#555" />

            {/* dish */}
            <Poly p={[[1115, 562], [1132, 565], [1116, 571]]} fill="#2f6e4c" />
            <Poly p={[[1225, 551], [1244, 543], [1245, 552]]} fill="#2a5d42" />
            <g clipPath="url(#dishClip)">
                <rect x="1050" y="450" width="215" height="120" fill="#5bc88b" />
                <path d="M1050 520Q1130 560 1262 540M1060 510Q1150 545 1262 522M1080 500Q1170 530 1262 507M1110 495Q1180 515 1262 494M1140 480Q1200 495 1262 480M1060 535Q1110 562 1200 562M1080 550L1190 480M1100 558L1215 460M1125 563Q1190 520 1240 465M1152 566Q1215 530 1258 480M1178 566Q1235 540 1262 505M1068 540L1160 490" stroke="#6f8f62" strokeWidth=".6" fill="none" />
            </g>
            <path d="M1168 525v3M1177 502v3" stroke="#b15a3a" />

            {/* rear disc */}
            <g clipPath="url(#rearClip)">
                <rect x="1070" y="370" width="110" height="110" fill="#285a3f" />
                <path d="M1078 395h94M1078 408L1172 420M1078 422L1172 436M1092 378v80M1106 378v80M1120 378v80M1134 378v80M1148 378v90M1161 390v80" stroke="#23523a" strokeWidth=".6" />
            </g>
            <path d="M1127 381h2M1171 438h2" stroke="#2e6b4a" strokeWidth="2" />

            {/* body */}
            <Poly p={[[1046, 318], [1068, 324], [1068, 340], [1050, 335]]} fill="#2d5742" />
            <Poly p={[[762, 375], [972, 440], [972, 512], [995, 539], [772, 468], [759, 450]]} fill="url(#wall)" />
            <path d="M774 380V466M806 390V478M828 397V484M855 405V492M880 413V500M905 420V508M930 428V516M954 436V520M762 386L972 451" stroke="#34704c" strokeWidth=".6" fill="none" />
            <path d="M945 442V510M952 446V508" stroke="#507a5d" strokeDasharray="2 2" />
            <path d="M942 515L990 536M950 508L984 528M945 522L975 512M955 526L980 518" stroke="#1c3a29" strokeWidth="2" strokeDasharray="2 1.500" />
            <Poly p={[[859, 498], [885, 505], [890, 509], [888, 511], [868, 507]]} fill="#2a6345" />
            <Mesh q={[[836, 249], [1046, 318], [1003, 358], [795, 290]]} n={20} m={9} fill="#5ac388" stroke="#439a6c" />
            <Mesh q={[[795, 290], [1003, 358], [972, 440], [762, 375]]} n={18} m={7} fill="#79d99f" stroke="#55a277" width={0.6} />
            <path d="M797 292L1001 360M801 284L1008 352M809 276L1016 344" stroke="#3b8f62" strokeWidth=".6" />
            {dots.map((d, i) => <circle key={i} cx={d[0]} cy={d[1]} r="1.700" fill="#387a55" />)}

            {/* box on the slanted face */}
            <Poly p={[[893, 357], [898, 359], [891, 378], [866, 371], [865, 369]]} fill="#24583d" />
            <Poly p={[[871, 352], [894, 358], [887, 376], [865, 369]]} fill="#7fdfa6" stroke="#3f8a61" />

            {/* top panel */}
            <Poly p={[[946, 260], [1025, 284], [998, 312], [930, 291], [924, 281]]} fill="#5cc98e" />
            <path d="M924 281L1002 308M960 264L932 290" stroke="#46946b" strokeWidth=".6" />
            <Poly p={[[928, 290], [998, 312], [998, 323], [928, 302]]} fill="#245f40" />
            <Poly p={[[998, 312], [1025, 284], [1025, 296], [998, 323]]} fill="#35704f" />
            <Poly p={[[898, 283], [908, 273], [938, 277], [925, 289]]} fill="#56bd86" />
            <Poly p={[[898, 283], [925, 289], [923, 310], [898, 302]]} fill="#2f6848" />
            <Poly p={[[925, 289], [938, 277], [937, 292], [923, 310]]} fill="#3e7d5a" />
            <Poly p={[[910, 271], [917, 265], [927, 268], [921, 273]]} fill="#5cc98e" />
            <Poly p={[[910, 271], [921, 273], [921, 283], [910, 280]]} fill="#2f6848" />
            <Poly p={[[921, 273], [927, 268], [926, 279], [921, 283]]} fill="#3e7d5a" />

            {/* open end frame */}
            <Poly p={[[1046, 318], [1073, 341], [1071, 413], [1034, 503], [995, 539], [970, 510], [972, 439], [1003, 358]]} fill="#38754f" />
            <Poly p={[[1015, 360], [1042, 331], [1041, 369], [1015, 362]]} fill="#265d3f" />
            <Mesh q={[[1014, 362], [1040, 369], [1005, 403], [1004, 380]]} n={5} m={5} fill="#5fc78d" stroke="#46a072" />
            <Poly p={[[1049, 334], [1065, 345], [1049, 360]]} fill="#64cd93" stroke="#3b8f62" />
            <Poly p={[[1049, 366], [1068, 352], [1068, 413], [1049, 416]]} fill="#21563a" />
            <Poly p={[[1006, 410], [1040, 378], [1042, 418], [1020, 413]]} fill="#2b6244" />
            <path d="M1065 353V412M1058 360V412" stroke="#397a56" strokeWidth="2" />
            <Poly p={[[982, 424], [987, 409], [997, 412]]} fill="#68ce95" />
            <Poly p={[[976, 437], [997, 420], [997, 483], [976, 503]]} fill="#2c6143" />
            <Poly p={[[976, 482], [995, 487], [976, 505]]} fill="#65cf95" stroke="#3b8f62" />
            <Poly p={[[1004, 412], [1045, 428], [1040, 445], [1028, 446], [1004, 434]]} fill="#235339" />
            <Mesh q={[[1004, 436], [1032, 443], [1022, 454], [1003, 466]]} n={5} m={4} fill="#64cd93" stroke="#46a072" />
            <Poly p={[[1003, 470], [1026, 450], [1052, 510], [1032, 500], [1003, 485]]} fill="#2b5d42" />
            <Mesh q={[[1001, 484], [1028, 496], [1018, 508], [1001, 524]]} n={5} m={5} fill="#5fc78d" stroke="#46a072" />
            <Poly p={[[1003, 379], [1000, 532], [995, 539], [994, 412]]} fill="#3d7b57" />
            <path d="M1003 410L1044 370M973 504L1036 450M974 440L1000 416M975 510L998 536" stroke="#397751" strokeWidth="4" />

            {/* arm and its bracket */}
            <Poly p={[[1126, 457], [1172, 471], [1170, 497], [1126, 486]]} fill="#2b6747" />
            <Poly p={[[1172, 471], [1186, 458], [1186, 484], [1172, 480]]} fill="#235238" />
            <path d="M1060 395L1078 399M1071 404l8-5" stroke="#7fbf9f" strokeWidth="1" />
            <Poly p={[[1003, 408], [1046, 418], [1055, 410], [1042, 371], [1046, 373], [1068, 413], [1187, 458], [1172, 472], [1128, 458], [1046, 430]]} fill="#5fca90" />
            <path d="M1046 423L1180 463M1055 410L1060 426M1105 428l-8 16M1150 444l-8 16" stroke="#489d6e" strokeWidth=".6" fill="none" />

            {/* front disc */}
            <g clipPath="url(#discClip)">
                <rect x="1000" y="420" width="140" height="110" fill="url(#disc)" />
                <path d="M1030 440v90M1042 430v100M1054 424v104M1066 424v104M1092 424v104M1105 424v104M1118 424v104M1020 495Q1080 520 1140 505" stroke="#2f6147" strokeWidth=".5" fill="none" />
            </g>
            <path d="M1082 424L1078 526" stroke="#6f9e83" strokeWidth=".7" />
            <path d="M1008 440Q1065 475 1136 475M1003 467Q1055 496 1134 500" stroke="#86c9a9" strokeWidth="1.400" fill="none" />
        </svg>
    )
}

function Triad() {
    return (
        <svg viewBox="0 -8 60 68" className="absolute right-[10px] bottom-[30px] h-[68px] w-[60px]" aria-hidden="true">
            <path d="M3 28l20 5v20L3 47zM3 28l12-9 16 6-8 8M31 25v17l-8 11" stroke="#c9c4cc" fill="none" />
            <path d="M18 26V10" stroke="#1c7a2c" strokeWidth="2.500" /><path d="M18 4l3 8h-6z" fill="#1c7a2c" />
            <path d="M28 24l3-3" stroke="#c2324e" strokeWidth="3" />
            <path d="M27 37l16 4" stroke="#1d4cc0" strokeWidth="2.500" /><path d="M49 43l-8 2 2-6z" fill="#1d4cc0" />
            <text x="16" y="2" fontSize="6" fill="#666">Y</text><text x="33" y="19" fontSize="6" fill="#c2324e">X</text><text x="52" y="47" fontSize="6" fill="#667">Z</text>
        </svg>
    )
}

function Viewport() {
    return (
        <main className="flex min-w-0 flex-1 flex-col bg-white">
            <div className="flex h-[14px] shrink-0 items-stretch gap-2 border-b-2 border-[#5f8c98] pt-[1px] pl-[2px]">
                <button className="flex items-center gap-[2px] px-[1px]"><Glyph name="femTab" />(Simulation) isat_launch_sim_backup.sim <Glyph name="lock" className="size-[6px]" /></button>
                <button className="flex items-center gap-[2px] px-[1px]"><Glyph name="femTab" />(FEM) isat_launch.fem</button>
                <button className="flex items-center gap-[3px] bg-[#0a6d84] px-[3px] text-white"><Glyph name="femTab" />(Simulation) isat_launch_sim1.sim <Glyph name="lockLight" className="size-[6px]" /><Glyph name="close" className="size-[5px]" /></button>
            </div>
            <div className="relative min-h-0 flex-1">
                <Satellite />
                <Triad />
            </div>
        </main>
    )
}

function Section({ title, className = '', children }: { title: string; className?: string; children: ReactNode }) {
    return (
        <section className={`mb-[2px] flex flex-col bg-[#fdfcfd] px-1 pb-1 ${className}`}>
            <h3 className="flex h-3 items-center gap-1 text-[#2b7678]"><Caret />{title}</h3>
            {children}
        </section>
    )
}

function PathPicker({ label }: { label: string }) {
    return (
        <div className="flex h-[11px] border border-[#dadade] bg-[#f5f4f6]">
            <input disabled aria-label={label} className="min-w-0 flex-1" />
            <button disabled aria-label={`Browse ${label}`} className="flex w-3 items-center justify-center border-l border-[#dadade]"><Glyph name="browse" /></button>
        </div>
    )
}

function ResponseDialog() {
    const [name, setName] = useState('Response Dynamics 1')
    const [importEvent, setImportEvent] = useState(false)
    const [useResult, setUseResult] = useState(true)
    return (
        <div role="dialog" aria-label="New Response Dynamics" className="absolute top-[148px] left-[460px] flex w-[149px] flex-col bg-[#ebeaed] shadow-[0_0_2px_#aaa]">
            <div className="flex h-3 items-center gap-[5px] bg-[#0a6579] px-1 text-white">
                <Glyph name="gearLight" className="size-[7px]" />
                <h2 className="flex-1 text-[7px]">New Response Dynamics</h2>
                <button aria-label="Reset"><Glyph name="reset" className="size-[6px]" /></button>
                <button aria-label="Help"><Glyph name="question" className="size-[6px]" /></button>
                <button aria-label="Close dialog"><Glyph name="close" className="size-[6px]" /></button>
            </div>
            <div className="flex flex-col px-1 pt-[2px]">
                <Section title="Name" className="h-[44px]">
                    <div className="mt-[3px] flex h-[11px] shrink-0 items-center border border-[#88888c] bg-white px-[2px]">
                        <input aria-label="Name" value={name} onChange={e => setName(e.target.value)} className="field-sizing-content bg-[#1976c5] text-white" />
                    </div>
                    <button className="mt-[2px] flex h-[11px] items-center gap-1 border border-[#eeecef] pl-1 text-[#2b7678]">
                        <svg viewBox="0 0 4 6" className="h-1 w-[3px]"><path d="M0 0l4 3-4 3z" fill="#444" /></svg>Description
                    </button>
                </Section>
                <Section title="Solution" className="h-[93px]">
                    <div className="mt-[2px] flex flex-1 flex-col bg-[repeating-linear-gradient(#fbfafc_0px,#fbfafc_9px,#f1eff3_9px,#f1eff3_10px)]">
                        <table className="w-full table-fixed text-left">
                            <colgroup><col className="w-10" /><col /></colgroup>
                            <thead><tr className="bg-[#eeecf0]"><th className="p-0 pl-1 font-normal leading-[10px]">Type</th><th className="p-0 pl-1 font-normal leading-[10px]">Name</th></tr></thead>
                            <tbody><tr className="bg-[#cde5e4]"><td className="p-0 pl-[2px] leading-[10px]">Dynamic</td><td className="p-0 pl-[3px] leading-[10px]">RD Frequency Response</td></tr></tbody>
                        </table>
                        <div className="mt-auto mb-1 ml-2 h-[2px] w-[107px] bg-[#97959c]" />
                    </div>
                </Section>
                <Section title="Event Evaluation File" className="h-[41px]">
                    <label className="mb-[2px] flex h-3 items-center gap-[3px]">
                        <input type="checkbox" checked={importEvent} onChange={e => setImportEvent(e.target.checked)} className="size-[6px] appearance-none rounded-[1px] border border-[#55555a] bg-white" />
                        Import Event from File
                    </label>
                    <PathPicker label="event file" />
                </Section>
                <Section title="Solution Attributes" className="h-[30px]">
                    <div className="mt-[1px] flex h-3 items-center justify-between">
                        <label htmlFor="tolerance">Rigid-Body Tolerance</label>
                        <div className="flex h-3 w-[68px] items-center border border-[#88888c] bg-white pr-[2px]">
                            <input id="tolerance" defaultValue="1" className="w-9 min-w-0 flex-1 pl-1" />
                            <select aria-label="Unit" className="w-3 appearance-none"><option>Hz</option></select>
                            <Caret /><Caret className="ml-1 text-[#333]" />
                        </div>
                    </div>
                </Section>
                <Section title="Evaluation Scratch Directory Settings" className="h-[75px]">
                    <label className="flex h-3 items-center gap-[3px]">
                        <input type="checkbox" checked={useResult} onChange={e => setUseResult(e.target.checked)} className="size-[6px] appearance-none rounded-[1px] border border-[#1457a6] checked:bg-[#1a62b5]" />
                        Use Nastran Result Directory
                    </label>
                    <div className="flex h-3 items-center justify-between">
                        <label htmlFor="directory">Directory</label>
                        <input id="directory" defaultValue="H:\02_Presentations\2026_Q1_Base" className="h-[11px] w-[96px] border border-[#88888c] bg-white px-[2px]" />
                    </div>
                    <label className="flex h-3 items-center gap-[3px] text-[#c3c3c8]">
                        <input type="checkbox" disabled className="size-[6px] appearance-none rounded-[1px] border border-[#c3c3c8]" />
                        Use Scratch Directory
                    </label>
                    <p className="h-[10px] text-[#c3c3c8]">Scratch Directory</p>
                    <PathPicker label="scratch directory" />
                </Section>
            </div>
            <div className="flex h-[19px] justify-end gap-[3px] pt-[2px] pr-2 pb-[5px]">
                <button className="w-[33px] bg-[#0a6d84] text-white">OK</button>
                <button className="w-[33px] border border-[#4b8f9c] bg-[#f5fafa] text-[#2b7678]">Apply</button>
                <button className="w-[33px] border border-[#4b8f9c] bg-[#f5fafa] text-[#2b7678]">Cancel</button>
            </div>
        </div>
    )
}

export default function App() {
    return (
        <div className="relative flex h-screen flex-col overflow-hidden bg-white font-['Roboto','Open_Sans',sans-serif] text-[6px] leading-[8px] text-[#333]">
            <TitleBar />
            <Ribbon />
            <SelectionBar />
            <div className="flex min-h-0 flex-1">
                <LeftRail />
                <Navigator />
                <Viewport />
                <RightRail />
            </div>
            <footer className="flex h-[11px] shrink-0 items-center border-t border-[#c9c9cd] bg-white pl-[2px] text-black">
                Create a new Response Dynamics solution process
            </footer>
            <ResponseDialog />
            <svg viewBox="0 0 12 16" className="absolute top-[47px] left-[161px] h-3 w-[9px]" aria-hidden="true">
                <path d="M1 1v12l3-3 2 5 2-1-2-5h4z" fill="#fff" stroke="#222" />
            </svg>
        </div>
    )
}
